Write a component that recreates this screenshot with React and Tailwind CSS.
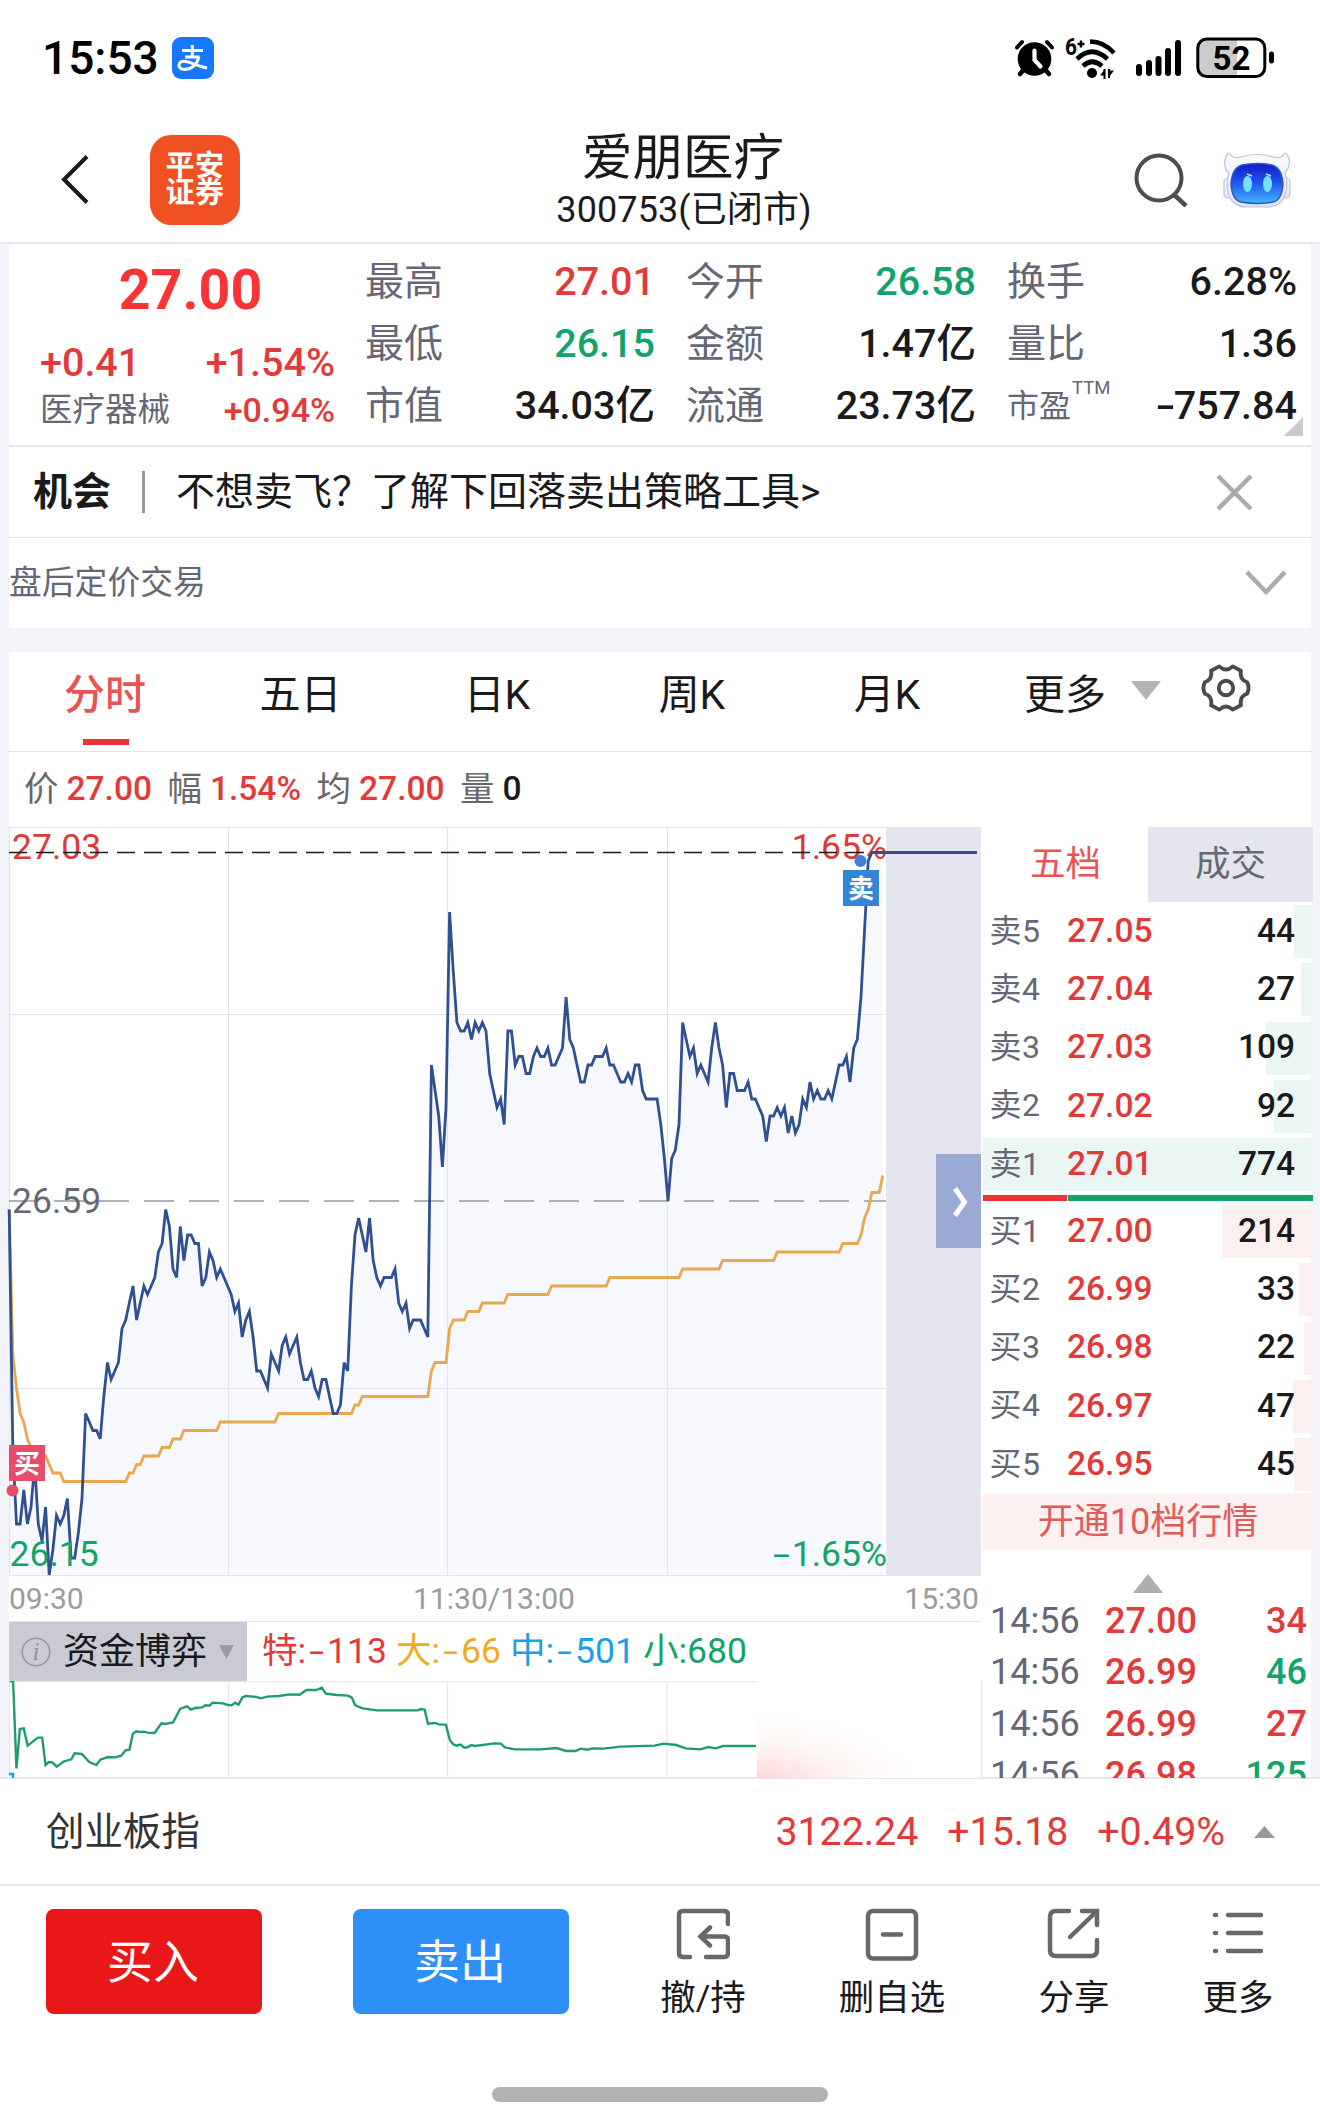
import React from "react";

const RED = "text-[#e23a3a]";
const GREEN = "text-[#12a36b]";
const DARK = "text-[#1a1a1c]";
const GRAY = "text-[#666775]";

/* Price per minute, in cents relative to the previous close (26.59). */
const PRICE = [
  -1, -29, -38, -38, -34, -38, -36, -31, -38, -40, -36, -44, -41, -37, -38, -37, -35, -42, -42, -39,
  -35, -25, -26, -27, -27, -28, -23, -19, -21, -20, -19, -15, -14, -12, -10, -14, -12, -10, -11, -10,
  -9, -6, -5, -1, -3, -8, -9, -3, -7, -4, -4, -5, -5, -10, -9, -6, -7, -9, -8, -9,
  -10, -11, -13, -12, -16, -14, -13, -16, -20, -20, -21, -22, -18, -19, -20, -17, -16, -18, -17, -16,
  -19, -21, -21, -20, -22, -23, -21, -21, -23, -25, -25, -24, -19, -20, -10, -4, -2, -4, -6, -2,
  -7, -9, -10, -9, -9, -9, -8, -12, -13, -12, -15, -14, -14, -14, -15, -16, 16, 13, 10, 4,
  11, 34, 27, 21, 20, 20, 21, 19, 21, 20, 21, 20, 15, 13, 11, 12, 9, 20, 20, 16,
  17, 17, 15, 15, 17, 18, 17, 17, 18, 16, 16, 17, 18, 24, 19, 18, 16, 14, 14, 16,
  16, 17, 17, 17, 18, 16, 16, 15, 14, 14, 15, 14, 16, 16, 13, 12, 12, 12, 12, 9,
  5, 0, 5, 6, 9, 21, 19, 17, 18, 15, 16, 15, 14, 18, 21, 18, 16, 11, 15, 15,
  13, 13, 13, 14, 12, 12, 11, 10, 7, 10, 10, 11, 10, 11, 8, 10, 8, 9, 12, 11,
  14, 12, 13, 12, 12, 13, 12, 14, 16, 16, 17, 14, 18, 19, 24, 32, 40, 41, 41, 41, 41,
];

/* Average price: [minute, cents] at each bend. */
const AVERAGE = [
  [0, -1], [1, -18], [2, -22], [3, -25], [4, -26], [5, -28], [6, -29], [10, -30], [12, -32], [14, -32],
  [15, -33], [32, -33], [33, -32], [34, -32], [35, -31], [36, -31], [37, -30], [41, -30], [42, -29],
  [44, -29], [45, -28], [47, -28], [48, -27], [57, -27], [58, -26], [73, -26], [74, -25], [94, -25],
  [95, -24], [96, -24], [97, -23], [115, -23], [116, -20], [117, -19], [120, -19], [121, -15], [122, -14],
  [125, -14], [126, -13], [129, -13], [130, -12], [136, -12], [137, -11], [148, -11], [149, -10],
  [164, -10], [165, -9], [184, -9], [185, -8], [195, -8], [196, -7], [210, -7], [211, -6], [228, -6],
  [229, -5], [233, -5], [234, -4], [235, -2], [236, -1], [237, 1], [239, 1], [240, 3],
];

const FLOW =
  "20,244 27,244 34,505 41,387 49,385 57,437 78,413 87,413 94,495 101,486 108,487 117,500 132,484 147,478 154,460 169,462 184,486 199,495 207,479 222,471 237,472 250,467 259,451 267,449 274,402 281,394 289,396 297,395 304,398 319,399 333,370 341,372 357,367 372,326 386,319 394,329 403,324 417,322 424,316 432,317 439,308 460,310 470,315 478,316 485,308 492,314 500,292 507,288 530,291 537,295 552,290 575,288 598,283 618,284 632,270 652,270 664,263 672,281 695,285 718,287 726,293 733,316 748,325 778,331 862,331 868,327 876,329 883,371 898,369 905,373 920,374 928,420 935,433 942,437 950,434 958,443 966,441 972,435 980,438 1020,430 1033,431 1042,442 1062,448 1115,448 1148,444 1168,453 1187,453 1198,446 1212,449 1222,445 1245,446 1280,440 1350,437 1370,431 1395,435 1415,445 1445,448 1461,441 1477,445 1492,438 1560,438";

const px = (n) => (9.2 + 3.64 * n).toFixed(1);
const py = (c) => (1201 - 8.5 * c).toFixed(1);

function StatusBar() {
  return (
    <div className="flex h-[116px] items-center pl-[42px] pr-[45px]">
      <div className="text-[46px] leading-none font-medium text-black">15:53</div>
      <svg className="ml-[13px]" width="42" height="42" viewBox="0 0 42 42">
        <rect width="42" height="42" rx="9" fill="#1677ff" />
        <g fill="none" stroke="#fff" strokeWidth="3">
          <path d="M10 13.5H31M20.3 8v12M13 20h14.5" />
          <path d="M27 20C25 27 20 32.5 12.5 32.5 8.500 32.500 6.500 30 7 27.800 7.600 25 10.500 24 14 24.500 20 25.500 25 29 35 31" />
        </g>
      </svg>
      <div className="ml-auto flex items-center">
        <svg width="42" height="42" viewBox="0 0 42 42" fill="none" stroke="#000" strokeLinecap="round">
          <circle cx="20.500" cy="22" r="16.800" fill="#000" stroke="none" />
          <path d="M3 10.500 8 5M38 10.500 33 5" strokeWidth="4" />
          <path d="M8.500 34 6 37M32.500 34 35 37" strokeWidth="4.500" />
          <path d="M20.500 13.500v9.500l6 6.500" stroke="#fff" strokeWidth="4.200" />
        </svg>
        <svg className="ml-[9px] overflow-visible" width="54" height="44" viewBox="0 0 54 44" fill="none" stroke="#000">
          <text x="0" y="18.500" fontSize="24" fontWeight="700" fill="#000" stroke="none" textLength="12" lengthAdjust="spacingAndGlyphs">6</text>
          <path d="M12.500 8h7M16 4.500v7" strokeWidth="2.400" />
          <path d="M25 5.500Q39 5.500 49 17" strokeWidth="4.600" />
          <path d="M12 23Q27 8.500 42.500 23" strokeWidth="4.600" />
          <path d="M18 30Q27 21.500 37 30" strokeWidth="4.600" />
          <circle cx="27" cy="37" r="5" fill="#000" stroke="none" />
          <path d="M39.500 33v10M44 33v9" strokeWidth="2" />
          <path d="M40 33l-5 6.500h5zM44 41l5-6.500h-5z" fill="#000" stroke="none" />
        </svg>
        <svg className="ml-[16px]" width="50" height="42" viewBox="0 0 50 42" stroke="#000" strokeWidth="6" strokeLinecap="round">
          <path d="M4 30v6M14 26v10M23.500 22v14M33 14v22M43 6v30" />
        </svg>
        <svg className="ml-[11px]" width="79" height="42" viewBox="0 0 79 42">
          <path d="M10 2H41V40H10Q2 40 2 32V10Q2 2 10 2Z" fill="#cbcbcb" />
          <rect x="1.800" y="2" width="67" height="37.500" rx="9" fill="none" stroke="#000" strokeWidth="3" />
          <rect x="73" y="14.500" width="5" height="12" rx="2.500" fill="#000" />
          <text x="35.500" y="32.500" fontSize="33" fontWeight="700" textAnchor="middle" fill="#000">52</text>
        </svg>
      </div>
    </div>
  );
}

function Robot() {
  return (
    <svg width="68" height="58" viewBox="0 0 68 58">
      <defs>
        <linearGradient id="face" x1="0" y1="0" x2="0" y2="1">
          <stop offset="0" stopColor="#1519c8" />
          <stop offset=".45" stopColor="#1c50ea" />
          <stop offset="1" stopColor="#45b4fb" />
        </linearGradient>
        <linearGradient id="shell" x1="0" y1="0" x2="0" y2="1">
          <stop offset="0" stopColor="#fbfcff" />
          <stop offset="1" stopColor="#dfe5f2" />
        </linearGradient>
      </defs>
      <g fill="url(#shell)" stroke="#b9c3da" strokeWidth="1.200">
        <rect x="1" y="27" width="8" height="20" rx="4" />
        <rect x="59" y="27" width="8" height="20" rx="4" />
        <path d="M5 2C8 2 8 9 18 6Q34 1 50 6C60 9 60 2 63 2C69 10 66 18 62 22Q66 34 62 44Q58 56 44 56H24Q10 56 6 44Q2 34 6 22C1 18 0 9 5 2Z" />
      </g>
      <path d="M19 14Q34 11 49 14Q59 17 60 33Q59 49 50 51Q34 54 18 51Q9 49 8 33Q9 17 19 14Z" fill="url(#face)" stroke="#2b57c9" strokeWidth="1.500" />
      <ellipse cx="24.500" cy="33" rx="4.500" ry="8" fill="#6fe3ff" />
      <ellipse cx="44.500" cy="33" rx="4.500" ry="8" fill="#6fe3ff" />
      <path d="M24 23l5 2M43 23l5 2" stroke="#a7f0ff" strokeWidth="1.500" />
    </svg>
  );
}

function Header() {
  return (
    <div className="grid h-[128px] grid-cols-[544px_280px_1fr] border-b-2 border-[#e6e7ee]">
      <div className="flex items-center pl-[60px]">
        <svg width="30" height="50" viewBox="0 0 30 50" fill="none" stroke="#1a1a1c" strokeWidth="4">
          <path d="M27 2.500 4 25.500 27 48.500" />
        </svg>
        <div className="ml-[60px] mt-[1px] flex h-[90px] w-[90px] flex-col items-center justify-center gap-[1px] rounded-[21px] bg-[#f05123] text-[29px] leading-[26px] font-bold text-white">
          <span className="h-[26px] tracking-[0.5px]">平安</span>
          <span className="h-[26px] tracking-[0.5px]">证券</span>
        </div>
      </div>
      <div className={"flex flex-col items-center pt-[13px] whitespace-nowrap " + DARK}>
        <div className="-ml-[2px] text-[50.500px] leading-[58px]">爱朋医疗</div>
        <div className="mt-[1px] text-[36px] leading-[44px] tracking-[0.1px]">300753(已闭市)</div>
      </div>
      <div className="flex items-center justify-end pr-[29px] pt-[1px]">
        <svg className="mr-[35px]" width="54" height="54" viewBox="0 0 54 54" fill="none" stroke="#4d4d4f" strokeWidth="4">
          <circle cx="25" cy="25" r="22.500" />
          <path d="M40.500 42 52 53" strokeWidth="4.500" />
        </svg>
        <Robot />
      </div>
    </div>
  );
}

/* A minus sign drawn wider than the font's hyphen. */
function Minus({ wide }) {
  return <span className={"inline-block scale-x-150 text-center " + (wide ? "w-[21px]" : "w-[17px]")}>-</span>;
}

function Stat({ label, value, color, sup, negative }) {
  return (
    <div className="flex h-[62px] items-center justify-between whitespace-nowrap leading-none">
      {sup ? (
        <span className={"flex text-[32px] " + GRAY}>
          {label}
          <sup className="top-0 -mt-[11px] ml-px self-start text-[18.500px] leading-none">{sup}</sup>
        </span>
      ) : (
        <span className={"text-[39px] " + GRAY}>{label}</span>
      )}
      <span className={"text-[39.500px] font-medium " + (color || DARK)}>
        {negative && <Minus />}
        {value}
      </span>
    </div>
  );
}

function Quote() {
  return (
    <section className="relative flex h-[203px] border-b-2 border-[#e6e7ea] bg-white leading-none">
      <div className="w-[326px] pl-[31px] whitespace-nowrap">
        <div className="flex h-[93px] items-center justify-center text-[55.500px] font-bold text-[#f93434]">
          <span className="ml-[6px]">27.00</span>
        </div>
        <div className={"flex h-[52px] items-center justify-between text-[39.500px] font-medium " + RED}>
          <span>+0.41</span>
          <span>+1.54%</span>
        </div>
        <div className="flex h-[42px] items-center justify-between">
          <span className={"text-[32.500px] " + GRAY}>医疗器械</span>
          <span className={"text-[34px] font-medium " + RED}>+0.94%</span>
        </div>
      </div>
      <div className="ml-[30px] grid grid-cols-[290px_290px_290px] content-start gap-x-[31px] pt-[7px]">
        <Stat label="最高" value="27.01" color={RED} />
        <Stat label="今开" value="26.58" color={GREEN} />
        <Stat label="换手" value="6.28%" />
        <Stat label="最低" value="26.15" color={GREEN} />
        <Stat label="金额" value="1.47亿" />
        <Stat label="量比" value="1.36" />
        <Stat label="市值" value="34.03亿" />
        <Stat label="流通" value="23.73亿" />
        <Stat label="市盈" sup="TTM" value="757.84" negative />
      </div>
      <svg className="absolute right-[8px] bottom-[9px]" width="19" height="19" viewBox="0 0 19 19">
        <path d="M19 0V19H0Z" fill="#c9c9d2" />
      </svg>
    </section>
  );
}

function Notices() {
  return (
    <>
      <section className={"flex h-[91px] items-center border-b border-[#e6e7ea] bg-white pr-[58px] pl-[24px] text-[39px] leading-none whitespace-nowrap " + DARK}>
        <b>机会</b>
        <i className="mr-[31px] ml-[31px] h-[42px] w-[3px] bg-[#9a9a9e]" />
        <span>不想卖飞？了解下回落卖出策略工具&gt;</span>
        <svg className="ml-auto" width="37" height="37" viewBox="0 0 37 37" stroke="#ababab" strokeWidth="4.500">
          <path d="M2 2 35 35M35 2 2 35" />
        </svg>
      </section>
      <section className="flex h-[90px] items-center justify-between bg-white pr-[23px]">
        <span className={"mt-[1px] text-[32.800px] leading-none " + GRAY}>盘后定价交易</span>
        <svg width="44" height="28" viewBox="0 0 44 28" fill="none" stroke="#ababab" strokeWidth="4.500">
          <path d="M3 3 22 23 41 3" />
        </svg>
      </section>
    </>
  );
}

function Gear() {
  return (
    <svg width="50" height="50" viewBox="-26 -26 52 52" fill="none" stroke="#4b4b4d" strokeWidth="4" strokeLinejoin="round">
      <path d="M-7-22.500Q0-16 7-22.500L15.500-18Q14-8.500 22-6Q25 0 22 6Q14 8.500 15.500 18L7 22.500Q0 16-7 22.500L-15.500 18Q-14 8.500-22 6Q-25 0-22-6Q-14-8.500-15.500-18Z" />
      <circle r="7.500" />
    </svg>
  );
}

function Tabs() {
  return (
    <div className={"flex h-[100px] border-b border-[#e4e5e9] text-[41px] leading-none whitespace-nowrap " + DARK}>
      <div className="flex w-[194px] flex-col items-center pt-[23px]">
        <span className="-ml-[2px] font-medium text-[#e85454]">分时</span>
        <i className="mt-[23px] h-[6px] w-[46px] bg-[#e83434]" />
      </div>
      <div className="w-[194px] pt-[23px] pl-[1px] text-center">五日</div>
      <div className="w-[200px] pt-[23px] text-center">日K</div>
      <div className="w-[190px] pt-[23px] text-center">周K</div>
      <div className="w-[200px] pt-[23px] text-center">月K</div>
      <div className="ml-[37px] pt-[23px]">更多</div>
      <svg className="mt-[29px] ml-[25px]" width="30" height="19" viewBox="0 0 30 19">
        <path d="M0 0H30L15 19Z" fill="#b3b3b3" />
      </svg>
      <div className="mt-[11px] ml-[40px]">
        <Gear />
      </div>
    </div>
  );
}

function InfoRow() {
  const items = [
    ["价", "27.00", RED],
    ["幅", "1.54%", RED],
    ["均", "27.00", RED],
    ["量", "0", DARK],
  ];
  return (
    <div className="flex h-[75px] items-center gap-[15.500px] pl-[15px] text-[33.500px] leading-none">
      {items.map(([k, v, c], i) => (
        <div key={i} className="flex gap-[8px]">
          <span className="text-[34.500px] text-[#68686a]">{k}</span>
          <span className={"font-medium " + c}>{v}</span>
        </div>
      ))}
    </div>
  );
}

function PriceChart() {
  const line = PRICE.map((c, n) => px(n) + "," + py(c)).join(" ");
  const avg = AVERAGE.map(([n, c]) => px(n) + "," + py(c)).join(" ");
  return (
    <svg className="block overflow-visible" width="972" height="749" viewBox="9 827 972 749" fontSize="35.500">
      <polygon points={"9.200,1575 " + line + " 883,1575"} fill="#f6f8fd" />
      <rect x="886" y="827" width="95" height="748" fill="#e4e5ee" />
      <path d="M9 827.500H886M9 1014.500H886M9 1388.500H886M9 1575.500H981M9.500 827V1575M228.500 827V1575M447.500 827V1575M667.500 827V1575" stroke="#e2e4ec" strokeWidth="1.200" />
      <path d="M9 1201H886" stroke="#97989c" strokeWidth="1.300" strokeDasharray="30 15" />
      <text x="12" y="1212.500" fill="#666775">26.59</text>
      <text x="12" y="859" fill="#dc3a3a">27.03</text>
      <text x="887" y="859" fill="#dc3a3a" textAnchor="end">1.65%</text>
      <path d="M9 852.500H886" stroke="#1b1b1d" strokeWidth="1.300" strokeDasharray="18 9" />
      <polyline points={avg} fill="none" stroke="#e8a84e" strokeWidth="2.800" />
      <polyline points={line + " 977,852.5"} fill="none" stroke="#2f5192" strokeWidth="2.800" />
      <text x="9.500" y="1566" fill="#12a36b">26.15</text>
      <text x="887" y="1566" fill="#12a36b" textAnchor="end">1.65%</text>
      <text x="773" y="1566" fill="#12a36b" textLength="17" lengthAdjust="spacingAndGlyphs">-</text>
      <circle cx="12.500" cy="1490.500" r="6" fill="#e74d68" />
      <rect x="9" y="1445" width="36" height="36" fill="#e74d68" />
      <text x="27" y="1472.500" fontSize="26" fontWeight="700" fill="#fff" textAnchor="middle">买</text>
      <circle cx="860.500" cy="861" r="6" fill="#3585d5" />
      <rect x="843" y="870" width="36" height="36" fill="#3585d5" />
      <text x="861" y="897.500" fontSize="26" fontWeight="700" fill="#fff" textAnchor="middle">卖</text>
      <rect x="936" y="1154" width="45" height="94" fill="#9aaad5" />
      <path d="M955 1188.500 964.500 1202 955 1215.500" fill="none" stroke="#fff" strokeWidth="5" />
    </svg>
  );
}

function FlowPanel() {
  return (
    <>
      <div className="flex h-[60px] items-center border-t border-[#e2e3e8] text-[35.500px] leading-none whitespace-nowrap">
        <div className={"flex h-full w-[238px] items-center bg-[#c9cad3] pl-[12px] " + DARK}>
          <svg width="30" height="30" viewBox="0 0 30 30">
            <circle cx="15" cy="15" r="13.800" fill="none" stroke="#9a9aa0" strokeWidth="1.600" />
            <text x="15" y="23" fontSize="25" fontStyle="italic" fontFamily="Liberation Serif, serif" textAnchor="middle" fill="#909096">i</text>
          </svg>
          <span className="ml-[12px] text-[36px]">资金博弈</span>
          <svg className="ml-[12px]" width="15" height="14" viewBox="0 0 15 14">
            <path d="M0 0H15L7.500 14Z" fill="#9b9ba2" />
          </svg>
        </div>
        <span className={"ml-[15px] w-[134px] " + RED}>特:<Minus wide />113</span>
        <span className="w-[114px] text-[#efac22]">大:<Minus wide />66</span>
        <span className="w-[133px] text-[#1c9ee8]">中:<Minus wide />501</span>
        <span className={GREEN}>小:680</span>
      </div>
      <svg className="block" width="973" height="97" viewBox="9 1681 973 97">
        <defs>
          <radialGradient id="glow" gradientUnits="userSpaceOnUse" cx="750" cy="1790" r="170" gradientTransform="translate(750 1790) scale(1 .45) translate(-750 -1790)">
            <stop offset="0" stopColor="#f9c6c8" />
            <stop offset=".3" stopColor="#fde4e4" />
            <stop offset=".65" stopColor="#fef7f6" />
            <stop offset="1" stopColor="#ffffff" />
          </radialGradient>
        </defs>
        <path d="M9 1681.500H757M9.500 1681V1778M228.500 1681V1778M447.500 1681V1778M667 1681V1778M981.300 1681V1778" stroke="#e6e7ec" strokeWidth="1.300" />
        <polyline points={FLOW} transform="translate(0 1600) scale(.4847 .33333)" vectorEffect="non-scaling-stroke" fill="none" stroke="#1f9c6c" strokeWidth="2.400" />
        <path d="M9 1774H13V1778" fill="none" stroke="#1c9ee8" strokeWidth="2.500" />
        <rect x="757" y="1700" width="223" height="78" fill="url(#glow)" />
      </svg>
    </>
  );
}

const ASKS = [
  ["卖5", "27.05", "44", 19],
  ["卖4", "27.04", "27", 12],
  ["卖3", "27.03", "109", 47],
  ["卖2", "27.02", "92", 39],
  ["卖1", "27.01", "774", 330],
];
const BIDS = [
  ["买1", "27.00", "214", 91],
  ["买2", "26.99", "33", 14],
  ["买3", "26.98", "22", 9],
  ["买4", "26.97", "47", 20],
  ["买5", "26.95", "45", 19],
];
const TRADES = [
  ["14:56", "27.00", "34", RED],
  ["14:56", "26.99", "46", GREEN],
  ["14:56", "26.99", "27", RED],
  ["14:56", "26.98", "125", GREEN],
];

function Level({ row, bar }) {
  return (
    <div className="relative flex h-[58.300px] items-start">
      <i className={"absolute top-0 right-0 h-[53px] " + bar} style={{ width: row[3] }} />
      <div className="relative flex h-[53px] flex-1 items-center pr-[18px] pb-[2px] pl-[6.500px]">
        <span className={"w-[77.500px] text-[32px] tracking-[0.5px] " + GRAY}>{row[0]}</span>
        <span className={"text-[33.500px] font-medium " + RED}>{row[1]}</span>
        <span className={"ml-auto text-[33.500px] font-medium " + DARK}>{row[2]}</span>
      </div>
    </div>
  );
}

function OrderBook() {
  return (
    <div className="h-[951px] w-[330px] shrink-0 overflow-hidden leading-none">
      <div className="flex h-[75px] text-[35.500px]">
        <div className="flex flex-1 items-center justify-center text-[#e85454]">五档</div>
        <div className={"flex w-[165px] items-center justify-center bg-[#e4e5ee] " + GRAY}>成交</div>
      </div>
      <div className="h-[293px] pt-[3px]">
        {ASKS.map((r) => (
          <Level key={r[0]} row={r} bar="bg-[#eaf6f3]" />
        ))}
      </div>
      <div className="flex h-[6px]">
        <i className="mr-px w-[84px] bg-[#ec3437]" />
        <i className="flex-1 bg-[#12a36b]" />
      </div>
      <div className="h-[292px] pt-[4px]">
        {BIDS.map((r) => (
          <Level key={r[0]} row={r} bar="bg-[#fcefef]" />
        ))}
      </div>
      <div className="flex h-[57px] items-center justify-center bg-[#fcf0f0] text-[36px] text-[#e25a5a]">开通10档行情</div>
      <svg className="mx-auto mt-[24px] block" width="30" height="19" viewBox="0 0 30 19">
        <path d="M0 19H30L15 0Z" fill="#adadad" />
      </svg>
      <div className="mt-[2px]">
        {TRADES.map((t, i) => (
          <div key={i} className="flex h-[51.500px] items-center pr-[6px] pl-[7px] text-[36px]">
            <span className={"w-[115px] " + GRAY}>{t[0]}</span>
            <span className={"font-medium " + RED}>{t[1]}</span>
            <span className={"ml-auto font-medium " + t[3]}>{t[2]}</span>
          </div>
        ))}
      </div>
    </div>
  );
}

function ChartCard() {
  return (
    <section className="mt-[24px] h-[1126px] bg-white">
      <Tabs />
      <InfoRow />
      <div className="flex w-[1304px] gap-[2px]">
        <div className="w-[972px] shrink-0">
          <PriceChart />
          <div className="flex h-[45px] justify-between pt-[8px] pr-[2px] text-[30px] leading-none text-[#9b9b9b]">
            <span className="w-[100px]">09:30</span>
            <span>11:30/13:00</span>
            <span className="w-[100px] text-right">15:30</span>
          </div>
          <FlowPanel />
        </div>
        <OrderBook />
      </div>
    </section>
  );
}

function IndexBar() {
  return (
    <div className={"flex h-[109px] items-center border-y-2 border-[#e6e7ec] pt-[2px] pr-[45px] pl-[46px] text-[39.300px] leading-none whitespace-nowrap " + RED}>
      <span className="mr-auto text-[38.500px] text-[#333335]">创业板指</span>
      <span>3122.24</span>
      <span className="ml-[29px]">+15.18</span>
      <span className="ml-[29px]">+0.49%</span>
      <svg className="-mt-[2px] ml-[29px]" width="21" height="12" viewBox="0 0 21 12">
        <path d="M0 12H21L10.500 0Z" fill="#999" />
      </svg>
    </div>
  );
}

function Action({ label, width, children }) {
  return (
    <div className={"flex flex-col items-center pt-[20px] " + width}>
      <svg width="54" height="54" viewBox="0 0 54 54" fill="none" stroke="#68686a" strokeWidth="4.500" strokeLinecap="round">
        {children}
      </svg>
      <span className={"mt-[20px] text-[35.500px] leading-none whitespace-nowrap " + DARK}>{label}</span>
    </div>
  );
}

function BottomBar() {
  return (
    <div className="flex h-[201px] pt-px pl-[46px]">
      <div className="mt-[22px] flex h-[105px] w-[216px] items-center justify-center rounded-[8px] bg-[#e91818] pr-[2px] text-[46px] leading-none text-white">买入</div>
      <div className="mt-[22px] ml-[91px] flex h-[105px] w-[216px] items-center justify-center rounded-[8px] bg-[#2e8ff9] pr-[2px] text-[46px] leading-none text-white">卖出</div>
      <Action label="撤/持" width="ml-[63px] w-[142px]">
        <path d="M52 17V8Q52 4 48 4H7Q3 4 3 8V46Q3 50 7 50H14" />
        <path d="M30 50H48Q52 50 52 46V33Q52 29.500 48 29.500H25M34 20.500 24.500 29.500 34 38.500" />
      </Action>
      <Action label="删自选" width="ml-[47px] w-[142px]">
        <rect x="3" y="4" width="48" height="47.500" rx="5" />
        <path d="M18 27.500H36" />
      </Action>
      <Action label="分享" width="ml-[40px] w-[142px]">
        <path d="M22 4H9Q3 4 3 10V43Q3 49 9 49H44Q50 49 50 43V33" />
        <path d="M35 4H50V18M49 5 23 30" />
      </Action>
      <Action label="更多" width="ml-[22px] w-[142px]">
        <path d="M4 8H5M17 8H50M4 26H5M17 26H50M4 44H5M17 44H50" />
      </Action>
    </div>
  );
}

export default function App() {
  return (
    <div className="h-[2120px] w-[1320px] overflow-hidden bg-white font-['Roboto','Noto_Sans_CJK_SC',sans-serif]">
      <StatusBar />
      <Header />
      <main className="h-[1533px] bg-[#f3f4f9] px-[9px]">
        <Quote />
        <Notices />
        <ChartCard />
      </main>
      <IndexBar />
      <BottomBar />
      <div className="mx-auto h-[15px] w-[336px] rounded-full bg-[#b2b2b2]" />
    </div>
  );
}
